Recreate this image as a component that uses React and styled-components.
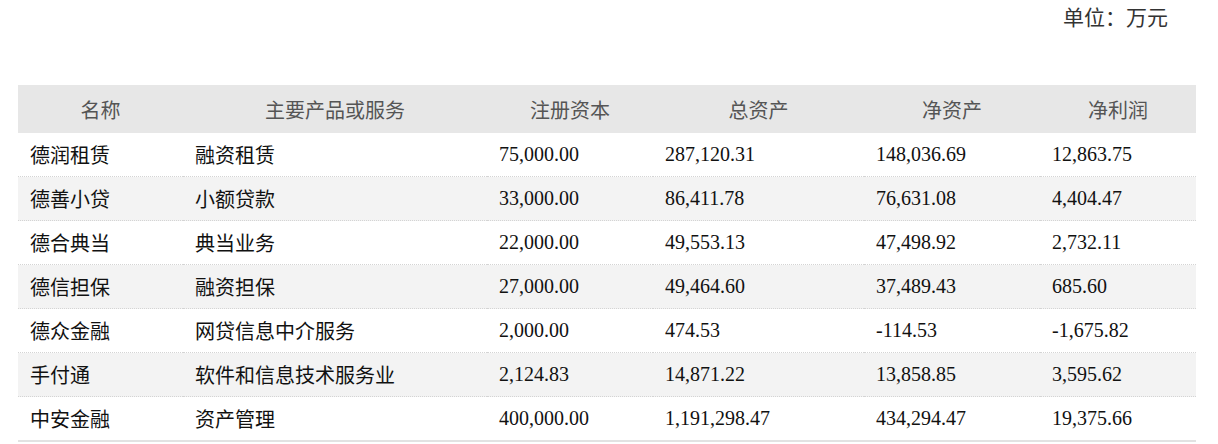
import styled, { createGlobalStyle } from 'styled-components'

const GlobalStyle = createGlobalStyle`
    body {
        margin: 0;
        background: #fff;
        font-family: "Liberation Serif", "Noto Sans CJK SC", serif;
    }
`;

const columns = [
    { title: '名称', width: 165 },
    { title: '主要产品或服务', width: 304 },
    { title: '注册资本', width: 166 },
    { title: '总资产', width: 211 },
    { title: '净资产', width: 176 },
    { title: '净利润', width: 156 },
];

const rows = [
    ['德润租赁', '融资租赁', '75,000.00', '287,120.31', '148,036.69', '12,863.75'],
    ['德善小贷', '小额贷款', '33,000.00', '86,411.78', '76,631.08', '4,404.47'],
    ['德合典当', '典当业务', '22,000.00', '49,553.13', '47,498.92', '2,732.11'],
    ['德信担保', '融资担保', '27,000.00', '49,464.60', '37,489.43', '685.60'],
    ['德众金融', '网贷信息中介服务', '2,000.00', '474.53', '-114.53', '-1,675.82'],
    ['手付通', '软件和信息技术服务业', '2,124.83', '14,871.22', '13,858.85', '3,595.62'],
    ['中安金融', '资产管理', '400,000.00', '1,191,298.47', '434,294.47', '19,375.66'],
];

const App = () => {
    return (
        <Page>
            <GlobalStyle />
            <Unit>单位：万元</Unit>
            <Table>
                <colgroup>
                    {columns.map((c) => (
                        <col key={c.title} style={{ width: c.width }} />
                    ))}
                </colgroup>
                <thead>
                    <tr>
                        {columns.map((c) => (
                            <HeadCell key={c.title}>{c.title}</HeadCell>
                        ))}
                    </tr>
                </thead>
                <tbody>
                    {rows.map((row, i) => (
                        <Row key={row[0]} $striped={i % 2 === 1}>
                            {row.map((cell, j) => (
                                <Cell key={j}>{cell}</Cell>
                            ))}
                        </Row>
                    ))}
                </tbody>
            </Table>
        </Page>
    )
}

const Page = styled.div`
    padding: 3px 22px 0 18px;
    width: 1178px;
`;

const Unit = styled.div`
    text-align: right;
    padding-right: 28px;
    height: 30px;
    line-height: 30px;
    font-size: 21px;
    color: #333;
    margin-bottom: 52px;
`;

const Table = styled.table`
    width: 1178px;
    border-collapse: collapse;
    table-layout: fixed;
    border-bottom: 2px solid #e2e2e2;
`;

const HeadCell = styled.th`
    height: 48px;
    padding: 0;
    background: #e7e7e7;
    font-weight: normal;
    font-size: 20px;
    color: #555;
    text-align: center;
`;

const Row = styled.tr`
    background: ${(p) => (p.$striped ? '#f3f3f3' : '#fff')};
    border-bottom: 1px dotted #d4d4d4;

    &:last-child {
        border-bottom: none;
    }
`;

const Cell = styled.td`
    height: 43px;
    padding: 0 0 0 12px;
    font-size: 20px;
    color: #111;
    white-space: nowrap;
`;

export default App;
